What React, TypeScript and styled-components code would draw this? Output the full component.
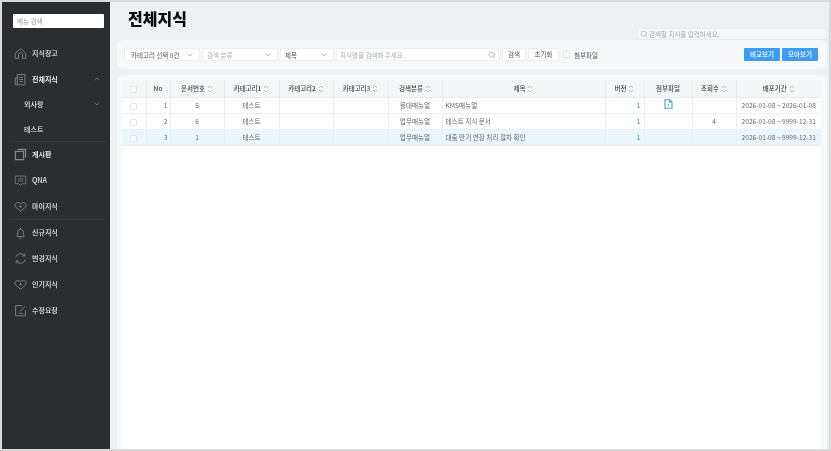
import React from "react";
import styled, { createGlobalStyle } from "styled-components";
import { ChevronDown, ChevronUp, Search } from "lucide-react";

const Global = createGlobalStyle`
  html, body { margin: 0; padding: 0; background: #d9d9d9; }
  body { font-family: "Noto Sans CJK KR", "Noto Sans", sans-serif; }
  * { box-sizing: border-box; }
`;

const Frame = styled.div`
  width: 831px; height: 451px; padding: 2px; background: #d9d9d9; overflow: hidden; filter: blur(0.3px);
`;
const Shell = styled.div`
  display: flex; width: 100%; height: 100%; overflow: hidden;
`;
const Sidebar = styled.aside`
  width: 108px; flex: none; background: #2c2d30; padding-top: 12px; display: flex; flex-direction: column; color: #e6e6e6;
`;
const SideSearch = styled.div`
  width: 91px; height: 14px; margin: 0 0 12px 11px; background: #fff; border-radius: 1px;
  font-size: 6.5px; line-height: 14px; color: #999; padding-left: 4px;
`;
const Nav = styled.nav`
  display: flex; flex-direction: column;
`;
const NavItem = styled.div<{ $sub?: boolean; $strong?: boolean }>`
  height: ${p => (p.$sub ? "24.5px" : "26px")}; display: flex; align-items: center; flex: none;
  padding-left: ${p => (p.$sub ? "22px" : "12px")};
  font-size: 7px; font-weight: ${p => (p.$strong ? 700 : 500)}; color: #e8e8e8;
  & > svg:first-child { flex: none; margin-right: 5px; color: #85868a; }
`;
const Caret = styled.span`
  margin-left: auto; margin-right: 9px; display: flex; color: #85868a;
`;
const NavRule = styled.div`
  height: 1px; background: #38393c; margin: 0 4px -1px 7px; flex: none;
`;
const Main = styled.main`
  flex: 1; min-width: 0; background: #eef1f4; display: flex; flex-direction: column; padding: 0 2px 0 7px;
`;
const TopRow = styled.div`
  height: 38px; flex: none; display: flex; justify-content: space-between; align-items: flex-start; padding: 0 0 0 11px;
`;
const Title = styled.h1`
  margin: 4px 0 0; font-size: 16px; line-height: 24px; font-weight: 900; color: #0a0a0a;
`;
const KnowledgeSearch = styled.div`
  width: 190px; height: 12px; margin-top: 25.5px; background: #f5f7f9; border: 1px solid #e8ebef; border-radius: 2px;
  display: flex; align-items: center; gap: 1px; padding-left: 2px; font-size: 6.5px; color: #a6a9ad;
`;
const FilterPanel = styled.section`
  height: 29px; flex: none; background: #f7f8fa; border-radius: 7px; display: flex; align-items: center; padding: 0 9px 0 7px;
`;
const SelectBox = styled.div<{ $w: number; $pad: number; $muted?: boolean }>`
  width: ${p => p.$w}px; height: 13px; flex: none; margin-right: 2px; background: #fff; border: 1px solid #eceef1; border-radius: 2px;
  display: flex; align-items: center; justify-content: space-between; padding: 0 5px 0 ${p => p.$pad}px;
  font-size: 6.5px; color: ${p => (p.$muted ? "#a9acb0" : "#555")}; svg { color: #8f9296; flex: none; }
`;
const SearchField = styled.div`
  width: 163px; height: 13px; flex: none; background: #fff; border: 1px solid #eceef1; border-radius: 2px; margin-right: 3px;
  display: flex; align-items: center; justify-content: space-between; padding: 0 2px 0 3px; font-size: 6.5px; color: #a9acb0;
  svg { color: #a0a3a7; }
`;
const PlainButton = styled.div<{ $w: number }>`
  width: ${p => p.$w}px; height: 13px; flex: none; margin-right: 2px; background: #fff; border: 1px solid #eceef1; border-radius: 2px;
  font-size: 6.5px; line-height: 11px; color: #555; text-align: center;
`;
const CheckLabel = styled.div`
  display: flex; align-items: center; gap: 4px; margin-left: 2px; font-size: 6.5px; color: #555;
`;
const Check = styled.span`
  display: inline-block; vertical-align: middle; width: 7px; height: 7px; background: #fff; border: 1px solid #e3e5e9; border-radius: 1px;
`;
const ActionGroup = styled.div`
  margin-left: auto; display: flex; gap: 2px;
`;
const PrimaryButton = styled.div`
  width: 36px; height: 13px; background: #3d9bf0; border-radius: 1px; color: #fff; font-size: 6.5px; line-height: 13px; text-align: center; font-weight: 500;
`;
const TablePanel = styled.section`
  flex: 1; margin-top: 6px; background: #f7f8fa; border-radius: 7px 7px 0 0; padding: 5px 6px 0 5px; min-height: 0; display: flex;
`;
const TableWrap = styled.div`
  flex: 1; background: #fff;
`;
const Table = styled.table`
  width: 699px; table-layout: fixed; border-collapse: collapse; font-size: 6.6px; color: #666;
`;
const Th = styled.th`
  height: 17px; padding: 0; background: #f4f5f7; border: 1px solid #e9ebee; border-top: 0; font-weight: 500; color: #444; font-size: 6.5px;
  &:first-child { border-left: 0; } &:last-child { border-right: 0; }
`;
const Row = styled.tr<{ $on?: boolean }>`
  background: ${p => (p.$on ? "#e9f7fd" : "#fff")};
`;
const Td = styled.td<{ $align?: string; $pad?: number; $blue?: boolean }>`
  height: 16px; padding: ${p => (p.$align === "left" ? `0 0 0 3px` : p.$align === "right" ? `0 ${p.$pad ?? 3}px 0 0` : "0")};
  border: 1px solid #eceef0; border-top: 0; text-align: ${p => p.$align || "center"}; color: ${p => (p.$blue ? "#2f86e0" : "#666")};
  &:first-child { border-left: 0; } &:last-child { border-right: 0; }
  white-space: nowrap;
`;
const SortWrap = styled.span`
  display: inline-flex; vertical-align: middle; margin-left: 2px;
`;
const FileIcon = styled.svg`
  display: block; margin: -3px auto 0;
`;

const Sort = () => (
  <SortWrap>
    <svg width="6" height="8" viewBox="0 0 6 8" fill="none" stroke="#aeb1b5" strokeWidth=".8">
      <path d="M1 3 3 1l2 2M1 5l2 2 2-2" />
    </svg>
  </SortWrap>
);

const ic = { width: 13, height: 13, viewBox: "0 0 16 16", fill: "none", stroke: "currentColor", strokeWidth: 1.1 };
const Heart = () => (
  <svg {...ic}><path d="M8 14 2 8.600C.5 7 .9 3.900 3.600 3.300 5.300 3 7 3.500 8 4.500c1-1 2.700-1.500 4.400-1.200 2.700.6 3.100 3.700 1.600 5.300z" /><path d="M8 6.500v3.200M6.400 8.100h3.200" /></svg>
);
const icons = {
  home: <svg {...ic}><path d="M1.500 7.800 8 2l6.500 5.800V14h-4V9.500a2.500 2.500 0 0 0-5 0V14h-4z" /></svg>,
  doc: <svg {...ic}><path d="M4 2h9.500v11.500a1 1 0 0 1-1 1H1.500V6H4zM4 6v8.500M6.500 5.500h4.500M6.500 8h4.500M6.500 10.500h4.500" /></svg>,
  board: <svg {...ic} strokeWidth={1.5}><path d="M1.800 4.200h10v10h-10zM4.200 1.800h10v10" /></svg>,
  chat: <svg {...ic}><path d="M1.500 2.500h13v9.500H10L8 14l-2-2H1.500zM5 6h6M5 8.500h6" strokeWidth={.9} /></svg>,
  bell: <svg {...ic}><path d="M3.500 13c.8-1.500 1-3 1-5 0-2.500 1.500-4 3.500-4s3.500 1.500 3.500 4c0 2 .2 3.500 1 5zM8 2v2M6.500 15h3" /></svg>,
  sync: <svg {...ic}><path d="M2.200 6.500A6 6 0 0 1 12.800 4.500M13.800 9.500A6 6 0 0 1 3.200 11.500M13.300 1.800v3.200h-3M2.700 14.200V11h3" /></svg>,
  edit: <svg {...ic}><path d="M10 2H2v12.500h12V8M7.500 9 14 2.500M6 11.500h4.500" /></svg>,
};

const cols = [24, 24, 54, 55, 54, 55, 54, 163, 39, 48, 44, 85];
const heads = ["", "No", "문서번호", "카테고리1", "카테고리2", "카테고리3", "검색분류", "제목", "버전", "첨부파일", "조회수", "배포기간"];
const noSort = new Set(["", "No", "첨부파일"]);
const rows = [
  { no: 1, doc: 5, kind: "응대매뉴얼", title: "KMS매뉴얼", file: true, views: "", date: "2026-01-08 ~ 2026-01-08" },
  { no: 2, doc: 6, kind: "업무매뉴얼", title: "테스트 지식 문서", file: false, views: "4", date: "2026-01-08 ~ 9999-12-31" },
  { no: 3, doc: 1, kind: "업무매뉴얼", title: "대출 만기 연장 처리 절차 확인", file: false, views: "", date: "2026-01-08 ~ 9999-12-31", on: true },
];

export default function App() {
  return (
    <Frame>
      <Global />
      <Shell>
        <Sidebar>
          <SideSearch>메뉴 검색</SideSearch>
          <Nav>
            <NavItem>{icons.home}지식창고</NavItem>
            <NavItem $strong>{icons.doc}전체지식<Caret><ChevronUp size={8} /></Caret></NavItem>
            <NavItem $sub>외사랑<Caret><ChevronDown size={8} /></Caret></NavItem>
            <NavItem $sub>테스트</NavItem>
            <NavRule />
            <NavItem $strong>{icons.board}게시판</NavItem>
            <NavItem>{icons.chat}QNA</NavItem>
            <NavItem><Heart />마이지식</NavItem>
            <NavRule />
            <NavItem>{icons.bell}신규지식</NavItem>
            <NavItem>{icons.sync}변경지식</NavItem>
            <NavItem><Heart />인기지식</NavItem>
            <NavItem>{icons.edit}수정요청</NavItem>
          </Nav>
        </Sidebar>
        <Main>
          <TopRow>
            <Title>전체지식</Title>
            <KnowledgeSearch><Search size={8} />검색할 지식을 입력하세요.</KnowledgeSearch>
          </TopRow>
          <FilterPanel>
            <SelectBox $w={76} $pad={6}>카테고리 선택 0건<ChevronDown size={8} /></SelectBox>
            <SelectBox $w={76} $pad={4} $muted>검색 분류<ChevronDown size={8} /></SelectBox>
            <SelectBox $w={54} $pad={4}>제목<ChevronDown size={8} /></SelectBox>
            <SearchField>지식명을 검색해 주세요.<Search size={8} /></SearchField>
            <PlainButton $w={24}>검색</PlainButton>
            <PlainButton $w={31}>초기화</PlainButton>
            <CheckLabel><Check />첨부파일</CheckLabel>
            <ActionGroup>
              <PrimaryButton>비교보기</PrimaryButton>
              <PrimaryButton>모아보기</PrimaryButton>
            </ActionGroup>
          </FilterPanel>
          <TablePanel>
            <TableWrap>
              <Table>
                <colgroup>{cols.map((w, i) => <col key={i} style={{ width: w }} />)}</colgroup>
                <thead>
                  <tr>
                    {heads.map((h, i) => (
                      <Th key={i}>{i === 0 ? <Check /> : h}{!noSort.has(h) && <Sort />}</Th>
                    ))}
                  </tr>
                </thead>
                <tbody>
                  {rows.map(r => (
                    <Row key={r.no} $on={r.on}>
                      <Td><Check /></Td>
                      <Td $align="right" $pad={2}>{r.no}</Td>
                      <Td>{r.doc}</Td>
                      <Td>테스트</Td>
                      <Td />
                      <Td />
                      <Td>{r.kind}</Td>
                      <Td $align="left">{r.title}</Td>
                      <Td $align="right" $blue>1</Td>
                      <Td>
                        {r.file && (
                          <FileIcon width="9" height="10" viewBox="0 0 9 10" fill="none" stroke="#3fa7c4" strokeWidth="1.1">
                            <path d="M1 .7h4.500L8 3v6.300H1zM5.500.7V3H8" />
                            <circle cx="4.500" cy="5.800" r=".9" fill="#3fa7c4" stroke="none" />
                          </FileIcon>
                        )}
                      </Td>
                      <Td>{r.views}</Td>
                      <Td>{r.date}</Td>
                    </Row>
                  ))}
                </tbody>
              </Table>
            </TableWrap>
          </TablePanel>
        </Main>
      </Shell>
    </Frame>
  );
}
